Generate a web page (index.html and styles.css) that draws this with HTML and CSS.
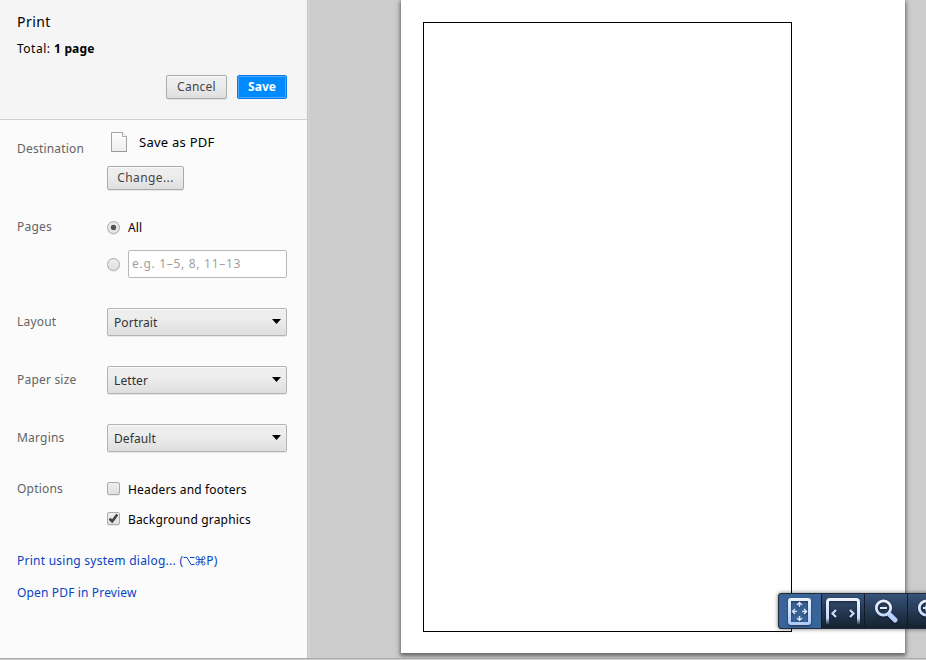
FILE: index.html
```
<!DOCTYPE html>
<html lang="en">
<head>
<meta charset="utf-8">
<title>Print</title>
<link rel="stylesheet" href="styles.css">
</head>
<body>
<div class="dialog">
  <aside class="sidebar">
    <header class="header">
      <h1 class="title">Print</h1>
      <p class="summary">Total: <b>1 page</b></p>
      <div class="actions">
        <button class="button cancel">Cancel</button>
        <button class="button save">Save</button>
      </div>
    </header>
    <section class="row destination">
      <div class="label">Destination</div>
      <div class="controls">
        <div class="target">
          <svg class="page-icon" width="18" height="22" viewBox="0 0 18 22">
            <defs><linearGradient id="paper" x1="0" y1="0" x2="0" y2="1"><stop offset="0" stop-color="#fff"/><stop offset="1" stop-color="#eee"/></linearGradient></defs>
            <path d="M1.5 1.5H12.500L16.500 5.500V20.500H1.500Z" fill="url(#paper)" stroke="#a4a4a4"/>
            <path d="M12.500 1.500V5.500H16.500" fill="#fff" stroke="#aaa"/>
            <path d="M1 20.500H17" stroke="#999"/>
          </svg>
          <span class="target-name">Save as PDF</span>
        </div>
        <button class="button change">Change...</button>
      </div>
    </section>
    <section class="row pages">
      <div class="label">Pages</div>
      <div class="controls">
        <div class="choice all"><span class="radio checked"></span><span>All</span></div>
        <div class="choice range"><span class="radio"></span><div class="field">e.g. 1–5, 8, 11–13</div></div>
      </div>
    </section>
    <section class="row option">
      <div class="label">Layout</div>
      <div class="select"><span>Portrait</span><svg width="9" height="5" viewBox="0 0 9 5"><path d="M0 0H9L4.5 5Z"/></svg></div>
    </section>
    <section class="row option">
      <div class="label paper-label">Paper size</div>
      <div class="select"><span>Letter</span><svg width="9" height="5" viewBox="0 0 9 5"><path d="M0 0H9L4.5 5Z"/></svg></div>
    </section>
    <section class="row option">
      <div class="label">Margins</div>
      <div class="select"><span>Default</span><svg width="9" height="5" viewBox="0 0 9 5"><path d="M0 0H9L4.5 5Z"/></svg></div>
    </section>
    <section class="row options">
      <div class="label">Options</div>
      <div class="controls">
        <div class="choice"><span class="checkbox"></span><span class="choice-text">Headers and footers</span></div>
        <div class="choice background"><span class="checkbox"><svg width="13" height="13" viewBox="0 0 13 13"><path d="M2.5 6.8L5.2 9.3L10.3 2.5" fill="none" stroke="#444" stroke-width="2.6"/></svg></span><span class="choice-text">Background graphics</span></div>
      </div>
    </section>
    <nav class="links">
      <a class="system">Print using system dialog... (<svg class="key" width="12" height="10" viewBox="0 0 12 10"><path d="M.5 1.500H4L8 8.500H11.500M7 1.500H11.500"/></svg><svg class="key command" width="11" height="10" viewBox="0 0 11 10"><path d="M4 3.500V2.200A1.500 1.500 0 1 0 2.500 3.500H8.500A1.500 1.500 0 1 0 7 2.200V7.300A1.500 1.500 0 1 0 8.500 6H2.500A1.500 1.500 0 1 0 4 7.300Z"/></svg>P)</a>
      <a class="preview-link">Open PDF in Preview</a>
    </nav>
  </aside>
  <main class="preview">
    <div class="sheet"><div class="frame"></div></div>
    <div class="toolbar">
      <svg width="0" height="0" class="defs"><defs>
        <linearGradient id="ink" gradientUnits="userSpaceOnUse" x1="0" y1="4" x2="0" y2="32"><stop offset="0" stop-color="#f0f4ff"/><stop offset="1" stop-color="#acc8fc"/></linearGradient>
        <linearGradient id="fade" gradientUnits="userSpaceOnUse" x1="0" y1="4" x2="0" y2="31"><stop offset="0" stop-color="#eef3ff"/><stop offset=".75" stop-color="#c8d9ff"/><stop offset="1" stop-color="#c8d9ff" stop-opacity="0"/></linearGradient>
      </defs></svg>
      <div class="tool active"><svg width="42" height="34" viewBox="0 0 42 34" fill="none" stroke="url(#ink)">
        <rect x="10.5" y="5.5" width="20" height="24" rx="1.5" stroke-width="3"/>
        <path stroke="#d5e2ff" stroke-width="1.5" d="M20.5 8.5V13M18 11L20.5 8.5L23 11M20.5 22V26.5M18 24L20.5 26.5L23 24M18 17.5H13.5M16 15L13.5 17.5L16 20M23 17.5H27.5M25 15L27.5 17.5L25 20"/>
      </svg></div>
      <div class="tool"><svg width="42" height="34" viewBox="0 0 42 34" fill="none">
        <path stroke="url(#fade)" stroke-width="3" d="M5.500 31V8Q5.500 5.500 8 5.500H34Q36.500 5.500 36.500 8V31"/>
        <path stroke="#cbdcff" stroke-width="2.200" d="M14 16L10.500 19.500L14 23M28 16L31.500 19.500L28 23"/>
      </svg></div>
      <div class="tool"><svg width="42" height="34" viewBox="0 0 42 34" fill="none" stroke="url(#ink)">
        <circle cx="18.500" cy="14" r="7.200" stroke-width="2.800"/><path stroke="#e0eaff" stroke-width="2" d="M15 14H22"/><path stroke="#b8d0ff" stroke-width="5" stroke-linecap="round" d="M25 21L30 26"/>
      </svg></div>
      <div class="tool"><svg width="42" height="34" viewBox="0 0 42 34" fill="none" stroke="url(#ink)">
        <circle cx="18.500" cy="14" r="7.200" stroke-width="2.800"/><path stroke="#e0eaff" stroke-width="2" d="M15 14H22M18.500 10.500V17.500"/><path stroke="#b8d0ff" stroke-width="5" stroke-linecap="round" d="M25 21L30 26"/>
      </svg></div>
    </div>
  </main>
</div>
</body>
</html>
```
FILE: styles.css
```
* { box-sizing: border-box; }
body {
  margin: 0;
  height: 660px;
  overflow: hidden;
  background: #ccc;
  color: #000;
  font: 12px/18px "Noto Sans", "Open Sans", sans-serif;
}
.dialog {
  display: flex;
  width: 926px;
  height: 659px;
  border-bottom: 1px solid #aaa;
}
.sidebar {
  width: 309px;
  flex: none;
  background: #fbfbfb;
  border-right: 1px solid #d8d8d8;
  box-shadow: inset -1px 0 #c2c2c2;
}
.header {
  height: 120px;
  margin-right: 1px;
  padding: 12px 20px 0 17px;
  background: #f5f5f5;
  border-bottom: 1px solid #d0d0d0;
}
.title { margin: 0; font-size: 14px; font-weight: 400; line-height: 20px; letter-spacing: .45px; }
.summary { margin: 8px 0 0; letter-spacing: .5px; }
.summary b { letter-spacing: .15px; }
.actions { display: flex; justify-content: flex-end; gap: 10px; margin-top: 17px; }
.button {
  height: 24px;
  padding: 0 0 1px;
  border: 1px solid #aaa;
  border-radius: 2px;
  background: linear-gradient(#eee, #ededed 38%, #dedede);
  box-shadow: 0 1px 0 rgba(0,0,0,.08), inset 0 1px 1px rgba(255,255,255,.75);
  color: #444;
  font: inherit;
}
.cancel { width: 61px; letter-spacing: .25px; }
.save {
  width: 50px;
  border-color: #0878e8;
  background: #008aff;
  box-shadow: inset 0 0 0 1px #4ba9fc;
  color: #fff;
  font-weight: 700;
}
.row { display: grid; grid-template-columns: 90px 180px; padding-left: 17px; }
.label { color: #646464; letter-spacing: .2px; white-space: nowrap; }
.destination { height: 88px; }
.destination .label { padding-top: 20px; }
.target { display: flex; align-items: center; height: 22px; margin-top: 11px; padding-left: 3px; }
.page-icon { display: block; }
.target-name { margin-left: 11px; font-size: 13px; letter-spacing: .25px; }
.change { display: block; width: 77px; margin-top: 13px; letter-spacing: .4px; }
.pages { height: 85px; }
.pages .label { padding-top: 10px; }
.choice { display: flex; align-items: center; height: 18px; letter-spacing: .17px; }
.all { margin-top: 11px; }
.all, .options .choice { align-items: flex-start; }
.all .radio { margin-top: 2px; }
.options .checkbox { margin-top: 2px; }
.choice-text { padding-top: 1px; }
.range { height: 28px; margin-top: 13px; }
.radio, .checkbox {
  flex: none;
  width: 13px;
  height: 13px;
  margin-right: 8px;
  border: 1px solid #aaa;
  background: linear-gradient(#eee, #e0e0e0);
  box-shadow: 0 1px 0 rgba(0,0,0,.07);
}
.radio { border-radius: 50%; }
.checked { background: radial-gradient(circle, #555 0 2.5px, #e8e8e8 3.1px); }
.checkbox { border-radius: 2px; }
.checkbox svg { display: block; margin: -1px; }
.field {
  width: 159px;
  height: 28px;
  padding: 4px 3px;
  border: 1px solid #b8b8b8;
  border-radius: 2px;
  background: #fff;
  color: #a0a0a0;
  letter-spacing: .7px;
}
.option { height: 58px; align-content: start; }
.option .label { padding-top: 20px; }
.select {
  display: flex;
  align-items: center;
  justify-content: space-between;
  height: 28px;
  margin-top: 15px;
  padding: 1px 6px 0;
  border: 1px solid #b3b3b3;
  border-radius: 2px;
  background: linear-gradient(#eee, #ededed 38%, #dedede);
  box-shadow: 0 1px 0 rgba(0,0,0,.08), inset 0 1px 1px rgba(255,255,255,.75);
  color: #333;
  letter-spacing: .1px;
}
.select svg { margin-right: -1px; margin-top: -2px; }
.options { height: 85px; }
.options .label { padding-top: 13px; }
.options .choice:first-child { margin-top: 13px; }
.options .background { margin-top: 12px; }
.links {
  display: grid;
  gap: 14px;
  justify-items: start;
  padding-left: 17px;
  color: #0644c4;
  white-space: nowrap;
  letter-spacing: .15px;
}
.system { letter-spacing: .25px; }
.key { fill: none; stroke: #0644c4; stroke-width: 1; vertical-align: -1px; }
.command { stroke-width: .9; }
.preview { position: relative; flex: 1; min-width: 0; padding-left: 92px; overflow: hidden; }
.sheet {
  width: 504px;
  height: 653px;
  padding: 22px;
  background: #fff;
  box-shadow: 0 2px 4px 1px #666;
}
.frame { width: 369px; height: 610px; border: 1px solid #000; }
.toolbar {
  position: absolute;
  left: 469px;
  top: 593px;
  display: flex;
  width: 174px;
  height: 36px;
  border: 1px solid #222c38;
  border-radius: 3px;
  background: #17232f;
  box-shadow: 0 0 4px rgba(0,0,0,.55);
}
.defs { position: absolute; }
.tool {
  flex: none;
  width: 43px;
  height: 34px;
  border-right: 1px solid #111c29;
  background: linear-gradient(#36527a, #15212f);
}
.tool svg { display: block; filter: drop-shadow(0 1px 1px rgba(0,0,0,.5)); }
.active { background: #386499; border-radius: 2px 0 0 2px; }
```
